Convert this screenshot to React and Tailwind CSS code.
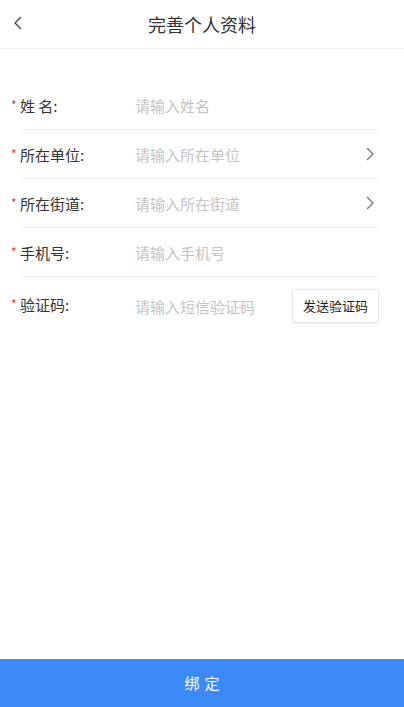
import React from "react";

const font = { fontFamily: '"Noto Sans CJK SC", "Noto Sans", sans-serif' };

function Chevron() {
  return (
    <svg width="9" height="14" viewBox="0 0 9 14" fill="none" className="shrink-0">
      <path d="M1.5 1.5 L7 7 L1.5 12.5" stroke="#777" strokeWidth="1.4" strokeLinecap="round" strokeLinejoin="round" />
    </svg>
  );
}

function Row({ label, placeholder, arrow, children, last }) {
  return (
    <div className={`ml-5 mr-6 flex items-center ${last ? "py-3" : "h-[49px] border-b border-[#efefef]"}`}>
      <div className={`flex w-[115px] shrink-0 items-center text-[15px] text-[#333] ${last ? "pb-[1px]" : "pt-[2px]"}`}>
        <span className="-ml-[9px] w-[9px] self-start pt-[3px] text-[12px] leading-[14px] text-[#e2343a]">*</span>
        <span>{label}</span>
      </div>
      <div className="flex-1 pt-[2px] text-[15px] text-[#c4c4c4]">{placeholder}</div>
      {arrow && (
        <div className="pr-[5px]">
          <Chevron />
        </div>
      )}
      {children}
    </div>
  );
}

export default function App() {
  return (
    <div className="flex min-h-screen flex-col bg-white" style={font}>
      <div className="relative flex h-[49px] items-center justify-center border-b border-[#f0f0f0]">
        <div className="absolute left-[13px] top-[16px]">
          <svg width="9" height="14" viewBox="0 0 9 14" fill="none">
            <path d="M7.5 1.5 L2 7 L7.5 12.5" stroke="#444" strokeWidth="1.4" strokeLinecap="round" strokeLinejoin="round" />
          </svg>
        </div>
        <div className="text-[18px] text-[#333]">完善个人资料</div>
      </div>

      <div className="mt-8 flex flex-col">
        <Row label="姓 名:" placeholder="请输入姓名" />
        <Row label="所在单位:" placeholder="请输入所在单位" arrow />
        <Row label="所在街道:" placeholder="请输入所在街道" arrow />
        <Row label="手机号:" placeholder="请输入手机号" />
        <Row label="验证码:" placeholder="请输入短信验证码" last>
          <button className="mr-px flex h-[34px] w-[87px] items-center justify-center rounded-[2px] border border-[#e6e6e6] bg-white text-[13px] text-[#222] shadow-[0_1px_2px_rgba(0,0,0,0.06)]">
            发送验证码
          </button>
        </Row>
      </div>

      <div className="mt-auto flex h-12 items-center justify-center gap-[5px] bg-[#3c8af6] text-[15px] text-white">
        <span>绑</span>
        <span>定</span>
      </div>
    </div>
  );
}
